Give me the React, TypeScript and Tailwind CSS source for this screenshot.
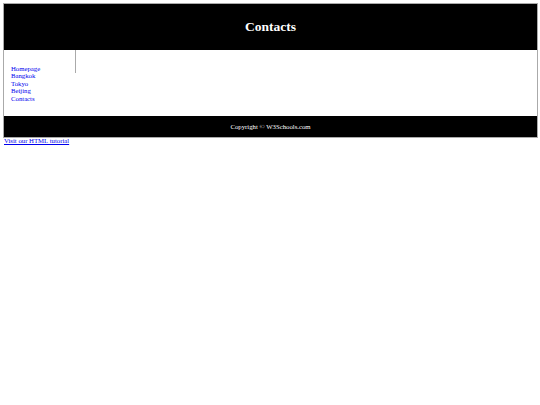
export default function App() {
  const cities = ['Homepage', 'Bangkok', 'Tokyo', 'Beijing', 'Contacts'];

  return (
    <div className="w-[540px] h-[405px] bg-white pt-[3px] font-['Liberation_Serif',serif] text-[6.75px] leading-[7.6px] text-black">
      <div className="ml-[3px] w-[535px] border border-[#aaa]">
        {/* header */}
        <header className="h-[46px] bg-black flex items-center justify-center">
          <h1 className="text-white font-bold text-[13.5px] leading-none">Contacts</h1>
        </header>

        {/* nav + article */}
        <div className="flex h-[66px]">
          <nav className="w-[71px] shrink-0 pl-[7px] pt-[14.5px]">
            <ul>
              {cities.map((c) => (
                <li key={c}>
                  <a href="#" className="text-[#0000ee]">{c}</a>
                </li>
              ))}
            </ul>
          </nav>
          <article className="flex-1 self-start h-[23px] border-l border-[#aaa]" />
        </div>

        {/* footer */}
        <footer className="h-[21px] bg-black flex items-center justify-center">
          <p className="text-white">Copyright © W3Schools.com</p>
        </footer>
      </div>

      <a href="#" className="block ml-[4px] -mt-[1px] text-[#0000ee] underline">Visit our HTML tutorial</a>
    </div>
  );
}
